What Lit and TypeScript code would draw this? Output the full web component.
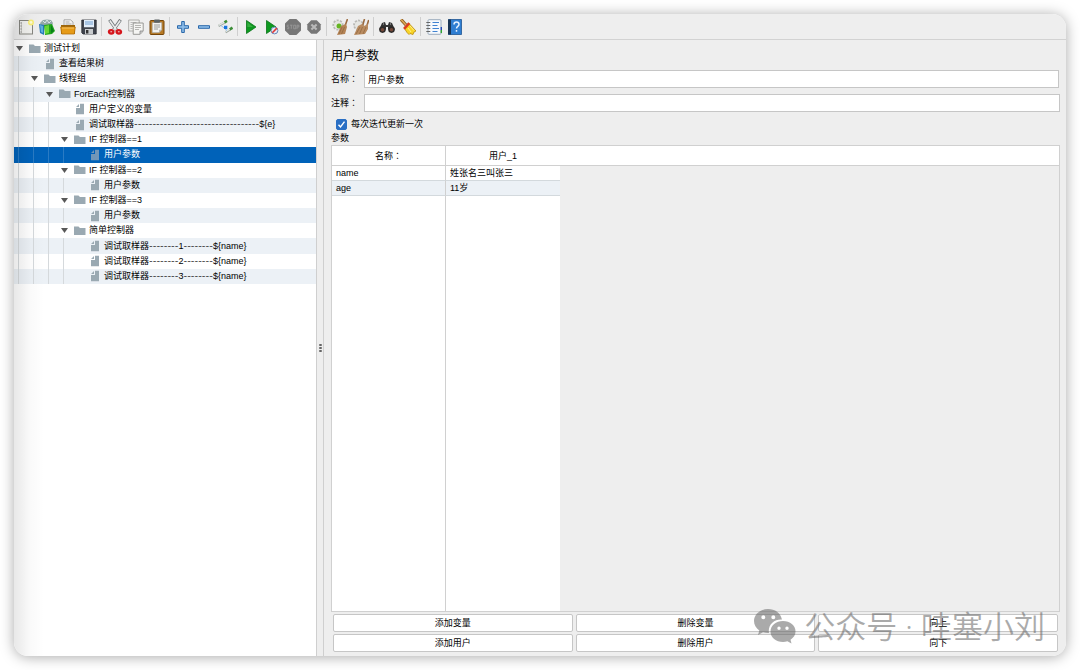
import { LitElement, html, css, svg, nothing } from "lit";
import { customElement, property, state } from "lit/decorators.js";
import { classMap } from "lit/directives/class-map.js";

const icons: Record<string, unknown> = {
  new: svg`<rect x="1.5" y="1.500" width="13" height="13.500" fill="#f1f1ee" stroke="#85857f"/><path d="M3.500 3v11" stroke="#c9c9c5"/><path d="M2.500 4h1M2.500 7h1M2.500 10h1M2.500 13h1" stroke="#777"/><circle cx="13" cy="3.400" r="3" fill="#f8ee78"/><circle cx="13" cy="3.400" r="1.400" fill="#fffcd6"/>`,
  templates: svg`<path d="M1 4l3-3 4-.5L12 1l2 3-1 3H2z" fill="#93a9a9"/><path d="M4 2l2 2 2-3 2 3 2-2" stroke="#dbe6e6" fill="none"/><path d="M0 5l5 1v10l-4-2z" fill="#2478b8"/><path d="M1 6l3 1v7l-2-1z" fill="#5cb0dd"/><path d="M5 6l8-1 3 7-3 3-7 1z" fill="#20a51d"/><path d="M6 7l4-1v8l-4 1z" fill="#67d735"/><path d="M12 6l3 6-3 2z" fill="#087f19"/>`,
  open: svg`<path d="M4 8V.8h6.500L13 3v5z" fill="#f2f2f2" stroke="#999" stroke-width=".8"/><path d="M5.500 3h4M5.500 5h6" stroke="#aaa"/><path d="M1 6h14v9H1z" fill="#9c650b"/><path d="M.7 8h14.600l-1 7H1.700z" fill="#e69b18" stroke="#b36f08" stroke-width=".8"/><path d="M2 9h12" stroke="#f8c767"/>`,
  save: svg`<path d="M.8 1h14.400v14H2L.8 13.800z" fill="#40444d" stroke="#262930" stroke-width=".8"/><path d="M3 1h10v7.300H3z" fill="#e3edf8"/><path d="M4 3h8M4 5h8" stroke="#6f9ed0"/><path d="M4 10h8v5H4z" fill="#c9ccce"/><path d="M5 11h2.400v3.500H5z" fill="#333"/>`,
  cut: svg`<path d="M2.500 .8l7 10M13.500 .8l-7 10" stroke="#73797b" stroke-width="3.200"/><path d="M2.800 1.500L9.500 11M13.200 1.500L6.500 11" stroke="#e9ebeb" stroke-width="1.600"/><ellipse cx="4.200" cy="12.800" rx="2.200" ry="1.700" fill="#f5eded" stroke="#d5151b" stroke-width="2.400"/><ellipse cx="11.800" cy="12.800" rx="2.200" ry="1.700" fill="#f5eded" stroke="#d5151b" stroke-width="2.400"/>`,
  copy: svg`<path d="M.7 1h10.500v11H.7z" fill="#f2f2f0" stroke="#a7a7a4" stroke-width=".9"/><path d="M2.500 3.500h6M2.500 5.500h2M2.500 7.500h2M2.500 9.500h2" stroke="#bbb"/><path d="M5.200 4h10v8l-3 3.300h-7z" fill="#f5f5f3" stroke="#8e8e8b" stroke-width=".9"/><path d="M7 6.500h6M7 8.500h6M7 10.500h4" stroke="#b6b6b3"/><path d="M15 12h-3v3" fill="#ccc" stroke="#888" stroke-width=".8"/>`,
  paste: svg`<rect x="1" y="1.500" width="14" height="14" rx="1" fill="#b77a25" stroke="#754508"/><path d="M3.200 3.500h9.600v7.200L10 13.700H3.200z" fill="#f1f1ef" stroke="#969691" stroke-width=".6"/><rect x="5" y=".5" width="6" height="3.200" rx="1" fill="#5c6264"/><path d="M5 6h6M5 8h6M5 10h4" stroke="#9c9c99"/><path d="M12.800 10.700H10v3" fill="#b7b7b5"/>`,
  plus: svg`<path d="M6.700 2.500h2.600v4.200h4.200v2.600H9.300v4.200H6.700V9.300H2.500V6.700h4.200z" fill="#8dbde9" stroke="#2b68a9"/>`,
  minus: svg`<path d="M2.500 6.700h11v2.600h-11z" fill="#8dbde9" stroke="#2b68a9"/>`,
  toggle: svg`<path d="M1.500 7L8 3.200M8.500 13.200l5-3" stroke="#9fa8a2" stroke-width="2.400"/><path d="M1.500 6.500L8 2.800M8.500 12.700l5-3" stroke="#e4e9e5" stroke-width="1.400"/><path d="M7.500 3.300l2.500-1.500M12.800 10.300l2.700-1.600" stroke="#3b8d36" stroke-width="2.600"/><path d="M4 6.500l6 5" stroke="#8dbbef" stroke-width="1"/><path d="M7 6.700h3.300V10H7z" fill="#1674df"/>`,
  play: svg`<path d="M3.500 1.500v13L13 8z" fill="#0d9920" stroke="#087316" stroke-width=".8"/><path d="M4.300 3v5L10 8z" fill="#35ad3f"/>`,
  playNoPause: svg`<path d="M2.500 1.500v13L12 8z" fill="#0d9920" stroke="#087316" stroke-width=".8"/><circle cx="10.500" cy="11.500" r="3.400" fill="#e4e7f0" stroke="#6689bb"/><path d="M8.300 13.700l4.600-4.600" stroke="#df3535" stroke-width="1.500"/>`,
  stop: svg`<path d="M4.600 0h6.800L16 4.600v6.800L11.400 16H4.600L0 11.400V4.600z" fill="#777"/><path d="M3.800 6.200H2.200v1.700h1.600v1.800H2M5 6.200h2.500M6.300 6.200v3.600M8.700 6.200h2v3.600h-2zM12 10V6.200h1.900V8H12" fill="none" stroke="#9d9d9d" stroke-width=".8"/>`,
  shutdown: svg`<path d="M5.200 1.300h5.600l3.900 3.900v5.600l-3.900 3.900H5.200l-3.900-3.900V5.200z" fill="#777"/><path d="M5.400 5.400l5.200 5.200M10.600 5.400l-5.200 5.200" stroke="#b9b9b9" stroke-width="2.100"/>`,
  clear: svg`<circle cx="6" cy="6" r="4.600" fill="#dededa" stroke="#b9b9b5" stroke-width="2" stroke-dasharray="2 1.300"/><circle cx="6" cy="6" r="3.700" fill="#e6e6e2"/><circle cx="7" cy="7" r="2.500" fill="#65b522"/><path d="M15.500 0L13 7" stroke="#9b6a3f" stroke-width="1.600"/><path d="M9 7l5-2 1 3-2 7-8 1z" fill="#b48355"/><path d="M10 8l-3 7M12.500 8l-3 7" stroke="#8d653d" stroke-width=".7"/>`,
  clearAll: svg`<circle cx="5.500" cy="6" r="4.400" fill="#dededa" stroke="#b9b9b5" stroke-width="2" stroke-dasharray="2 1.300"/><circle cx="5.500" cy="6" r="3.500" fill="#e6e6e2"/><path d="M11.500 0L9.500 7M15.700 1L13.500 8" stroke="#9b6a3f" stroke-width="1.600"/><path d="M5 7l4-2 2 2 4-2v5l-3 5-11 1z" fill="#b98b60"/><path d="M7 8l-4 7M9.500 8l-3 7M13 8l-3 7" stroke="#8d653d" stroke-width=".7"/>`,
  search: svg`<path d="M3 4l3-1 1 3h2l1-3 3 1 2.800 6.500H9V8H7v2.500H.2z" fill="#333"/><circle cx="3.500" cy="10.600" r="3.300" fill="#2c2928"/><circle cx="12.500" cy="10.600" r="3.300" fill="#2c2928"/><circle cx="3.500" cy="10.800" r="1.800" fill="#75493a"/><circle cx="12.500" cy="10.800" r="1.800" fill="#75493a"/><path d="M4 5h1M11 5h1" stroke="#bbb"/>`,
  broom: svg`<path d="M1 .5l5 5.500" stroke="#8c5a21" stroke-width="3.200"/><path d="M1 .5l5 5.500" stroke="#dda956" stroke-width="1.400"/><path d="M9 4.500l7 7.500-2 1-1 2.500-3-1-1 1-2-2-2.500-4z" fill="#f8d426" stroke="#bb8c0a" stroke-width=".8"/><path d="M4 9.800L9.300 4.100" stroke="#d83d20" stroke-width="2.600"/><path d="M8 9l3 4M10 7l4 4.500" stroke="#fff08c"/>`,
  list: svg`<rect x="2" y=".7" width="13" height="14.600" rx="1" fill="#f6f9fd" stroke="#92a4b5" stroke-width=".9"/><path d="M6.500 3.500h6.500M6.500 6.500h5M6.500 9.500h6.500M6.500 12.500h5" stroke="#4183d1" stroke-width="1.200"/><path d="M.3 3.500h4M.3 6.500h4M.3 9.500h4M.3 12.500h4" stroke="#666"/><path d="M15.300 8v3" stroke="#2449b5" stroke-width="1.400"/><path d="M15.300 11v3" stroke="#31a332" stroke-width="1.400"/>`,
  help: svg`<path d="M1.500.5h13v15h-13z" fill="#2f7ed2" stroke="#205592" stroke-width=".8"/><path d="M1 .5h3v15H1z" fill="#193454"/><path d="M7 5.500c0-3.200 5-3.200 5 0 0 1.800-2.500 2-2.500 4M9.500 11v1.700" fill="none" stroke="#e4f0ff" stroke-width="1.500"/>`,
};

const toolGroups: [string, string][][] = [
  [["new", "新建"], ["templates", "模板"], ["open", "打开"], ["save", "保存"]],
  [["cut", "剪切"], ["copy", "复制"], ["paste", "粘贴"]],
  [["plus", "全部展开"], ["minus", "全部折叠"], ["toggle", "切换"]],
  [["play", "启动"], ["playNoPause", "不停顿开始"], ["stop", "停止"], ["shutdown", "关闭"]],
  [["clear", "清除"], ["clearAll", "清除全部"]],
  [["search", "查找"], ["broom", "重置查找"]],
  [["list", "函数助手"], ["help", "帮助"]],
];

@customElement("tool-bar")
export class ToolBar extends LitElement {
  static styles = css`
    :host { display: flex; align-items: center; box-sizing: border-box; height: 26px; padding-left: 1px; background: #eee; border-bottom: 1px solid #d2d2d2; }
    .group { display: flex; align-items: center; height: 19px; }
    .group + .group { border-left: 1px solid #cfcfcf; margin-left: 2px; padding-left: 2px; }
    .tool { width: 21px; height: 19px; padding: 0; border: 0; background: none; display: grid; place-items: center; }
    svg { width: 16px; height: 16px; display: block; }
  `;
  render() {
    return toolGroups.map(g => html`<div class="group">${g.map(([id, label]) => html`
      <button class="tool" aria-label=${label}><svg viewBox="0 0 16 16" fill="none">${icons[id]}</svg></button>`)}</div>`);
  }
}

interface Node { text: string; depth: number; folder?: boolean; }
const nodes: Node[] = [
  { text: "测试计划", depth: 0, folder: true },
  { text: "查看结果树", depth: 1 },
  { text: "线程组", depth: 1, folder: true },
  { text: "ForEach控制器", depth: 2, folder: true },
  { text: "用户定义的变量", depth: 3 },
  { text: "调试取样器" + "-".repeat(34) + "${e}", depth: 3 },
  { text: "IF 控制器==1", depth: 3, folder: true },
  { text: "用户参数", depth: 4 },
  { text: "IF 控制器==2", depth: 3, folder: true },
  { text: "用户参数", depth: 4 },
  { text: "IF 控制器==3", depth: 3, folder: true },
  { text: "用户参数", depth: 4 },
  { text: "简单控制器", depth: 3, folder: true },
  { text: "调试取样器--------1--------${name}", depth: 4 },
  { text: "调试取样器--------2--------${name}", depth: 4 },
  { text: "调试取样器--------3--------${name}", depth: 4 },
];

@customElement("plan-tree")
export class PlanTree extends LitElement {
  @state() private selected = 7;
  static styles = css`
    :host { display: block; background: #fff; overflow: hidden; }
    .tree { list-style: none; margin: 0; padding: 1px 0 0; height: 243px; display: grid; grid-auto-rows: 1fr; }
    .row { display: flex; align-items: center; min-height: 0; white-space: pre; line-height: 15px; }
    .row:nth-child(even) { background: #ecf1f6; }
    .row.selected { background: #0062b9; color: #fff; }
    .guide, .handle { flex: none; width: 15px; align-self: stretch; box-sizing: border-box; }
    .guide { padding-left: 4px; }
    .guide::before { content: ""; display: block; height: 100%; border-left: 1px solid #d5d9dc; }
    .selected .guide::before { border-color: #2a7bc4; }
    .handle { display: flex; align-items: center; padding-left: 2px; }
    .dashes { font: 8px/15px Inter, sans-serif; }
    svg { display: block; flex: none; }
    .kind { width: 12px; height: 12px; margin-right: 3px; }
  `;
  private label(text: string) {
    return text.split(/(-+)/).map(part => part.startsWith("-") ? html`<span class="dashes">${part}</span>` : part);
  }
  render() {
    return html`<ul class="tree" role="tree">${nodes.map((n, i) => html`
      <li class=${classMap({ row: true, selected: i === this.selected })} role="treeitem" aria-level=${n.depth + 1}
        aria-selected=${i === this.selected} @click=${() => (this.selected = i)}>${Array.from({ length: n.depth }, () => html`<span class="guide"></span>`)}<span class="handle">${n.folder
          ? html`<svg width="7" height="5" viewBox="0 0 7 5"><path d="M0 0h7L3.500 5z" fill="#585858"/></svg>` : nothing}</span><svg class="kind" viewBox="0 0 12 12">${n.folder
          ? svg`<path d="M0 1.500h4.500L6 3h5.500v7H0z" fill="#9aa9b2"/>`
          : svg`<path d="M6 .8h4v10.400H2V5h4zM5 1v3H2z" fill=${i === this.selected ? "#7197b8" : "#9aa9b2"}/>`}</svg><span>${this.label(n.text)}</span></li>`)}</ul>`;
  }
}

@customElement("user-parameters")
export class UserParameters extends LitElement {
  @property({ type: Array }) rows = [["name", "姓张名三叫张三"], ["age", "11岁"]];
  static styles = css`
    :host { display: flex; flex-direction: column; box-sizing: border-box; min-width: 0; padding: 7px 6px 4px 7px; background: #eee; }
    h1 { margin: 0 0 5px; font-size: 12px; line-height: 18px; font-weight: 400; }
    .field { display: flex; align-items: center; height: 18px; margin-bottom: 6px; }
    .field label { flex: none; width: 33px; }
    .colon { font-family: "Noto Sans CJK TC", sans-serif; }
    .field input { flex: 1; min-width: 0; box-sizing: border-box; height: 18px; padding: 0 3px; border: 1px solid #c6c6c6; background: #fff; font: inherit; color: inherit; outline: 0; }
    .field .name { margin: 0 1px 0 0; }
    .check { display: flex; align-items: center; gap: 4px; height: 12px; padding-left: 5px; }
    .check input { appearance: none; width: 11px; height: 11px; margin: 0; border-radius: 2px; border: 1px solid #aaa; background: #fff; }
    .check input:checked { border-color: #2a6fc4; background: #2a6fc4 url("data:image/svg+xml,%3Csvg xmlns='http://www.w3.org/2000/svg' viewBox='0 0 9 9'%3E%3Cpath d='M1.500 4.800l2 2.200 4-5.400' fill='none' stroke='white' stroke-width='1.400'/%3E%3C/svg%3E"); }
    .caption { padding-top: 2px; line-height: 13px; }
    .grid { flex: 1; min-height: 0; display: grid; grid-template-rows: minmax(0, 1fr); border: 1px solid #d0d0d0; overflow: hidden; }
    table { width: 100%; height: 100%; table-layout: fixed; border-collapse: separate; border-spacing: 0; }
    .col { width: 114px; }
    th, td { padding: 0 4px; box-sizing: border-box; font-weight: 400; line-height: 14px; overflow: hidden; white-space: nowrap; }
    th { height: 20px; background: #fff; border-bottom: 1px solid #d0d0d0; }
    td { text-align: left; background: #fff; }
    td:first-child, th:first-child { border-right: 1px solid #d0d0d0; }
    .data td { height: 15px; border-bottom: 1px solid #d3d9dd; }
    .data:nth-child(even) td { background: #ecf1f6; }
    tr td.outside { background: #eee; border: 0; }
    .data:nth-child(even) td.outside { background: #eee; }
    .actions { display: grid; grid-template-columns: repeat(3, 1fr); gap: 2px 3px; padding: 2px 2px 0; }
    .actions button { height: 18px; padding: 0; border: 1px solid #c6c6c6; border-radius: 2px; background: #fff; font: inherit; color: inherit; line-height: 16px; }
  `;
  render() {
    const colon = html`<span class="colon" lang="zh-TW">${"\uFF1A"}</span>`;
    return html`
      <h1>用户参数</h1>
      <div class="field"><label for="name">名称${colon}</label><input id="name" class="name" .value=${"用户参数"}></div>
      <div class="field"><label for="note">注释${colon}</label><input id="note"></div>
      <label class="check"><input type="checkbox" checked>每次迭代更新一次</label>
      <div class="caption">参数</div>
      <div class="grid"><table>
        <colgroup><col class="col"><col class="col"><col></colgroup>
        <thead><tr><th>名称${colon}</th><th>用户_1</th><th></th></tr></thead>
        <tbody>
          ${this.rows.map(r => html`<tr class="data"><td>${r[0]}</td><td>${r[1]}</td><td class="outside"></td></tr>`)}
          <tr><td></td><td></td><td class="outside"></td></tr>
        </tbody>
      </table></div>
      <div class="actions">${["添加变量", "删除变量", "向上", "添加用户", "删除用户", "向下"].map(t => html`<button>${t}</button>`)}</div>`;
  }
}

@customElement("app-root")
export class AppRoot extends LitElement {
  static styles = css`
    :host { display: block; box-sizing: border-box; height: 100vh; padding: 14px; background: #fff; color: #000; font: 9px/15px "Liberation Sans", "Noto Sans CJK SC", sans-serif; overflow: hidden; }
    .window { position: relative; height: 100%; display: flex; flex-direction: column; border-radius: 14px; overflow: hidden; }
    .frame { height: 100%; border-radius: 14px; box-shadow: 0 1px 14px rgba(0, 0, 0, 0.34); }
    .body { flex: 1; min-height: 0; display: grid; grid-template-columns: 302px 8px minmax(0, 1fr); }
    .splitter { box-sizing: border-box; border: solid #cfcfcf; border-width: 0 1px; background: #eee; display: flex; flex-direction: column; align-items: center; justify-content: center; gap: 1px; }
    .splitter i { width: 3px; height: 2px; border-radius: 1px; background: #666; }
    .shade { position: absolute; inset: 0 auto 0 0; width: 30px; background: linear-gradient(to right, rgba(0, 0, 0, 0.09), rgba(0, 0, 0, 0.02) 55%, transparent); pointer-events: none; }
    .mark { position: absolute; right: 21px; bottom: 12px; display: flex; align-items: center; gap: 8px; color: #666; opacity: 0.55; font: 350 31px/36px "Noto Sans", "Noto Sans CJK SC", sans-serif; white-space: nowrap; pointer-events: none; }
    .mark svg { width: 43px; height: 36px; }
  `;
  render() {
    return html`<div class="frame"><div class="window">
      <tool-bar></tool-bar>
      <div class="body">
        <plan-tree></plan-tree>
        <div class="splitter"><i></i><i></i><i></i></div>
        <user-parameters></user-parameters>
      </div>
      <div class="shade"></div>
      <div class="mark">
        <svg viewBox="0 0 43 36" fill="currentColor"><path fill-rule="evenodd" d="M15 1C7 1 1 6.500 1 13c0 4 2 7 5.300 9.400L5 27l5-2.700c2 .6 4 .8 6 .7C14.500 17 21 11 29 11.500 27.500 5 22 1 15 1zM10.300 7.200a2 2 0 1 1 0 4 2 2 0 0 1 0-4zm10 0a2 2 0 1 1 0 4 2 2 0 0 1 0-4z"/><path fill-rule="evenodd" d="M30 13c-7 0-12.500 4.600-12.500 10.500S23 34 30 34c1.500 0 3-.2 4.400-.7L38.500 35.500l-1-3.700c3-2 5-5 5-8.300C42.500 17.600 37 13 30 13zM26 18.500a1.700 1.700 0 1 1 0 3.400 1.700 1.700 0 0 1 0-3.400zm8 0a1.700 1.700 0 1 1 0 3.400 1.700 1.700 0 0 1 0-3.400z"/></svg>
        <span>公众号 · 哇塞小刘</span>
      </div>
    </div></div>`;
  }
}
